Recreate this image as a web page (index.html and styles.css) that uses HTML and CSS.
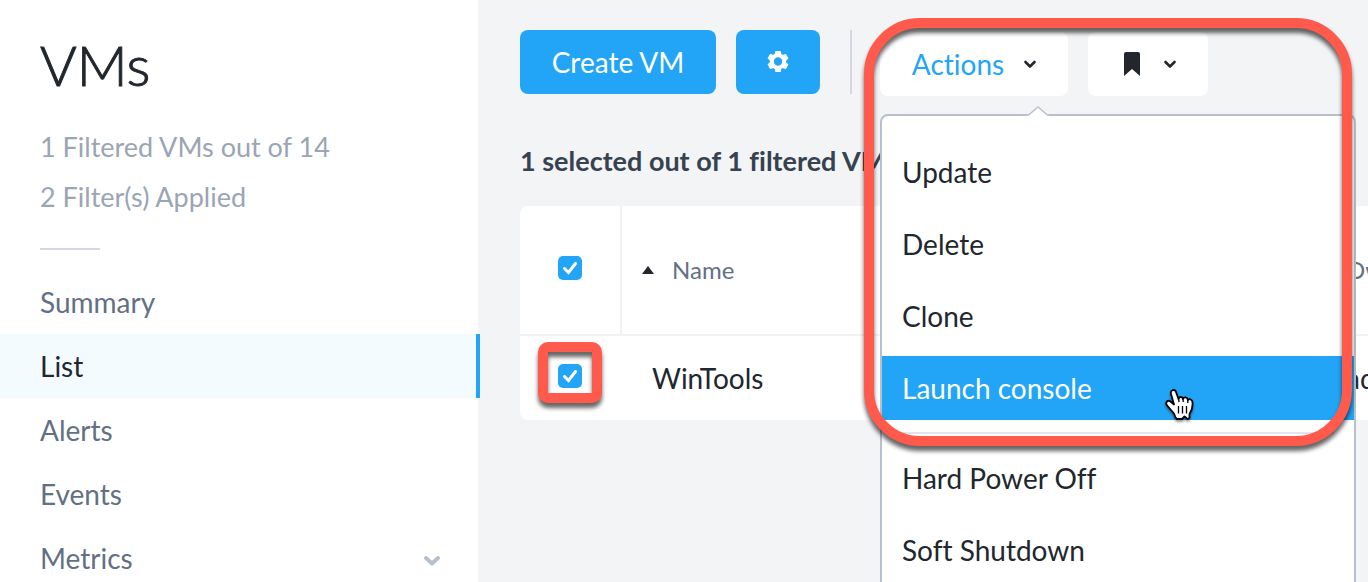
FILE: index.html
```html
<!DOCTYPE html>
<html lang="en">
<head>
<meta charset="utf-8">
<title>VMs</title>
<link rel="stylesheet" href="styles.css">
</head>
<body>
<div class="app">
  <aside class="sidebar">
    <h1 class="title">VMs</h1>
    <p class="summary">1 Filtered VMs out of 14</p>
    <p class="summary">2 Filter(s) Applied</p>
    <hr class="rule">
    <nav class="nav">
      <a class="nav-item" href="#">Summary</a>
      <a class="nav-item active" href="#" aria-current="page">List</a>
      <a class="nav-item" href="#">Alerts</a>
      <a class="nav-item" href="#">Events</a>
      <a class="nav-item" href="#">Metrics
        <svg class="nav-chevron" width="16" height="10" viewBox="0 0 16 10" aria-hidden="true"><path d="M2 2l6 5.500L14 2" fill="none" stroke="#b8c0cd" stroke-width="4" stroke-linecap="round" stroke-linejoin="round"/></svg>
      </a>
    </nav>
  </aside>

  <main class="main">
    <div class="toolbar">
      <button class="button primary create" type="button">Create VM</button>
      <button class="button primary settings" type="button" aria-label="Settings">
        <svg width="22" height="22" viewBox="0 0 20 20" aria-hidden="true"><path fill="#fff" stroke="#fff" stroke-linejoin="round" fill-rule="evenodd" d="M8 .5h4l.5 2.500 1.900 1.100 2.500-.9 2 3.500-2 1.700v2.200l2 1.700-2 3.500-2.500-.9-1.900 1.100-.5 2.500H8l-.5-2.500-1.900-1.100-2.500.9-2-3.500 2-1.700V8.400l-2-1.700 2-3.500 2.500.9 1.900-1.100zM10 5.200a4.300 4.300 0 1 0 0 8.600 4.300 4.300 0 0 0 0-8.600z"/></svg>
      </button>
      <span class="divider"></span>
      <div class="dropdown">
        <button class="button plain actions" type="button" aria-haspopup="menu" aria-expanded="true">Actions
          <svg width="12" height="9" viewBox="0 0 12 9" aria-hidden="true"><path d="M1.500 2L6 6.500 10.500 2" fill="none" stroke="#22272e" stroke-width="2.600" stroke-linecap="round" stroke-linejoin="round"/></svg>
        </button>
        <div class="menu" role="menu">
          <svg class="menu-caret" width="22" height="12" viewBox="0 0 22 12" aria-hidden="true"><path d="M0 10L11 1l11 9v2H0z" fill="#fff"/><path d="M1 9.500L11 1l10 8.500" fill="none" stroke="#b8c0cd" stroke-width="1.500"/></svg>
          <button class="menu-item" type="button" role="menuitem">Update</button>
          <button class="menu-item" type="button" role="menuitem">Delete</button>
          <button class="menu-item" type="button" role="menuitem">Clone</button>
          <button class="menu-item hovered" type="button" role="menuitem">Launch console</button>
          <hr class="menu-rule">
          <button class="menu-item" type="button" role="menuitem">Hard Power Off</button>
          <button class="menu-item" type="button" role="menuitem">Soft Shutdown</button>
          <svg class="cursor" width="34" height="38" viewBox="0 0 34 38" aria-hidden="true"><path d="M12.500 30.500L11 26.500 4.500 19C1.500 15.500 4.500 12.500 7.500 14.500L11 17.500 8 7C7 2.500 12 1.500 13.200 5.500L15.500 12C16 9.300 19.500 9.300 20 12 21 9.500 24.500 10 24.800 13 26.500 11.300 29.500 12.500 29.500 15.500 30 21 28.500 24 26.500 27V31L24.500 32 21.500 29.500 19 32H14z" fill="#fff" stroke="#000" stroke-width="1.800" stroke-linejoin="round"/><path d="M15.500 12l.6 3M20 12l.3 3M24.800 13v3M15.500 19v7.500M19.500 19v7.500M23.500 19v7.500" fill="none" stroke="#000" stroke-width="1.300"/></svg>
        </div>
        <span class="highlight highlight-menu"></span>
      </div>
      <button class="button plain bookmark" type="button" aria-label="Bookmarks">
        <svg width="16" height="24" viewBox="0 0 16 24" aria-hidden="true"><path d="M2 0h12q2 0 2 2v22l-8-7-8 7V2q0-2 2-2z" fill="#22272e"/></svg>
        <svg width="12" height="9" viewBox="0 0 12 9" aria-hidden="true"><path d="M1.500 2L6 6.500 10.500 2" fill="none" stroke="#22272e" stroke-width="2.600" stroke-linecap="round" stroke-linejoin="round"/></svg>
      </button>
    </div>

    <p class="selection">1 selected out of 1 filtered VMs</p>

    <table class="table">
      <colgroup><col class="col-check"><col class="col-name"><col></colgroup>
      <thead>
        <tr>
          <th class="check-cell"><label class="check"><input type="checkbox" checked aria-label="Select all"><svg width="24" height="24" viewBox="0 0 24 24" aria-hidden="true"><path d="M6.500 12.500l4 4L17.500 7.500" fill="none" stroke="#fff" stroke-width="3" stroke-linecap="round"/></svg></label></th>
          <th><span class="sort"><svg width="12" height="8" viewBox="0 0 12 8" aria-hidden="true"><path d="M6 0l6 8H0z" fill="#22272e"/></svg>Name</span></th>
          <th>Owner</th>
        </tr>
      </thead>
      <tbody>
        <tr>
          <td class="check-cell"><label class="check"><input type="checkbox" checked aria-label="Select WinTools"><svg width="24" height="24" viewBox="0 0 24 24" aria-hidden="true"><path d="M6.500 12.500l4 4L17.500 7.500" fill="none" stroke="#fff" stroke-width="3" stroke-linecap="round"/></svg><span class="highlight highlight-check"></span></label></td>
          <td class="name-cell">WinTools</td>
          <td>admin</td>
        </tr>
      </tbody>
    </table>
  </main>
</div>
</body>
</html>
```
FILE: styles.css
```css
* { box-sizing: border-box; }
body {
  margin: 0;
  background: #f2f4f6;
  color: #22272e;
  font: 28px/34px Lato, "Open Sans", sans-serif;
  font-variant-ligatures: none;
}
button, input { font: inherit; font-variant-ligatures: none; color: inherit; }
svg { display: block; flex: none; }
.app { display: flex; height: 100vh; overflow: hidden; }

.sidebar { flex: 0 0 478px; background: #fff; padding-top: 30px; }
.title {
  margin: 0 40px 30px;
  font-size: 56px; line-height: 70px; font-weight: 300;
  -webkit-text-stroke: 1px #22272e;
}
.summary { margin: 0 40px 16px; font-size: 27px; color: #9aa5b5; }
.rule { width: 60px; height: 2px; margin: 34px 40px 20px; border: 0; background: #d3d9df; }
.nav { display: flex; flex-direction: column; }
.nav-item {
  display: flex; align-items: center; justify-content: space-between;
  height: 64px; padding: 0 38px 0 40px;
  color: #627084; text-decoration: none;
}
.nav-item.active {
  position: relative; margin-right: -2px;
  border-right: 4px solid #22a5f7;
  background: #f3fbff; color: #22272e;
}
.nav-chevron { margin-top: 6px; }

.main { flex: 1; min-width: 0; padding: 30px 0 0 42px; }
.toolbar { display: flex; align-items: flex-start; gap: 20px; height: 66px; }
.button {
  display: flex; align-items: center; justify-content: center;
  height: 64px; padding: 0; border: 0; border-radius: 8px;
}
.primary { background: #22a5f7; color: #fff; }
.create { width: 196px; }
.settings { width: 84px; }
.divider { width: 2px; height: 64px; margin: 0 8px 0 10px; background: #d3d9df; }
.dropdown { position: relative; margin-top: 2px; }
.plain { background: #fff; }
.actions { width: 188px; gap: 20px; color: #22a5f7; }
.bookmark { width: 120px; gap: 24px; margin-top: 2px; padding-left: 4px; }

.menu {
  position: absolute; z-index: 2; top: 82px; left: 0;
  display: flex; flex-direction: column; gap: 8px;
  width: 476px; padding: 24px 0;
  border: 2px solid #b8c0cd; border-radius: 8px; background: #fff;
}
.menu-item {
  flex: none; height: 64px; padding: 0 20px;
  border: 0; background: none; text-align: left;
}
.menu-item.hovered { background: #22a5f7; color: #fff; }
.menu-rule { width: 432px; height: 2px; margin: 4px 20px; border: 0; background: #e2e5ec; }
.menu-caret { position: absolute; top: -10px; left: 145px; }
.cursor {
  position: absolute; top: 271px; left: 281px;
  filter: drop-shadow(0 2px 1px rgba(0, 0, 0, 0.4));
}

.highlight {
  position: absolute; z-index: 3;
  border: 10px solid #ff5a4c;
  pointer-events: none;
  filter: drop-shadow(0 5px 2px rgba(0, 0, 0, 0.6));
}
.highlight-menu { top: -14px; left: -16px; width: 488px; height: 428px; border-radius: 56px; }
.highlight-check { top: -22px; left: -20px; width: 64px; height: 61px; border-radius: 10px; }

.selection { margin: 48px 0 28px; color: #36424f; font-size: 27px; font-weight: 700; }

.table {
  width: 100%; table-layout: fixed; border-spacing: 0;
  background: #fff; border-radius: 8px 0 0 8px;
}
.col-check { width: 102px; }
.col-name { width: 704px; }
th, td { padding: 0 0 0 20px; text-align: left; white-space: nowrap; }
th { height: 130px; border-bottom: 2px solid #f0f2f4; color: #627084; font-size: 24px; font-weight: 400; }
td { height: 84px; }
.sort { display: flex; align-items: center; gap: 18px; }
.check-cell { padding: 0 0 4px 38px; }
th.check-cell { border-right: 2px solid #f0f2f4; }
td.name-cell { padding-left: 30px; }
.check { position: relative; display: block; width: 24px; height: 24px; }
.check input {
  appearance: none; display: block; width: 24px; height: 24px; margin: 0;
  border-radius: 5px; background: #22a5f7;
}
.check svg { position: absolute; top: 0; left: 0; }
```
